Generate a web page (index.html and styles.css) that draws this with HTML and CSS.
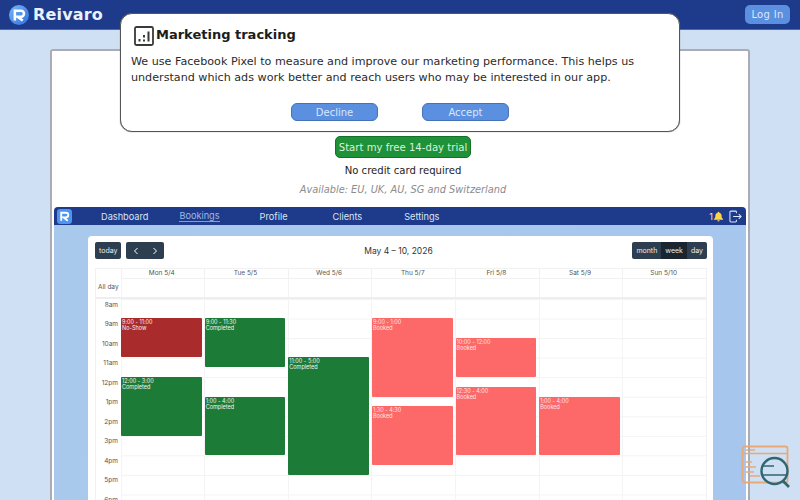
FILE: index.html
```html
<!DOCTYPE html>
<html lang="en">
<head>
    <meta charset="UTF-8">
    <meta name="viewport" content="width=device-width, initial-scale=1.0">
    <title>Reivaro</title>
    <link rel="stylesheet" href="styles.css">
</head>
<body>
    <header class="topbar">
        <div class="brand">
            <svg class="brand-logo" viewBox="0 0 24 24" width="20" height="20">
                <defs>
                    <linearGradient id="logo-bg" x1="0" y1="0" x2="1" y2="1">
                        <stop offset="0" stop-color="#7ab8f7"/>
                        <stop offset="1" stop-color="#2f6fe0"/>
                    </linearGradient>
                </defs>
                <circle cx="12" cy="12" r="12" fill="url(#logo-bg)"/>
                <path d="M7 18.500V7h7.500a3.500 3.500 0 0 1 0 7H10l6.500 4.500" fill="none" stroke="#fff" stroke-width="3"/>
            </svg>
            <span class="brand-name">Reivaro</span>
        </div>
        <button class="login-btn">Log In</button>
    </header>

    <main class="page-card">
        <div class="hero">
            <button class="trial-btn">Start my free 14-day trial</button>
            <p class="no-card">No credit card required</p>
            <p class="available">Available: EU, UK, AU, SG and Switzerland</p>
        </div>

        <div class="app-shot">
            <nav class="app-nav">
                <svg class="app-logo" viewBox="0 0 16 16" width="15" height="15">
                    <rect width="16" height="16" rx="3.500" fill="#4f94ee"/>
                    <path d="M4.500 12.500V4h5a2.400 2.400 0 0 1 0 5H7l4.500 3.500" fill="none" stroke="#fff" stroke-width="2"/>
                </svg>
                <a class="app-link link-dashboard">Dashboard</a>
                <a class="app-link link-bookings">Bookings</a>
                <a class="app-link link-profile">Profile</a>
                <a class="app-link link-clients">Clients</a>
                <a class="app-link link-settings">Settings</a>
                <div class="app-nav-right">
                    <span class="notif-count">1</span>
                    <svg viewBox="0 0 12 12" width="11" height="11">
                        <path d="M6 .8a1 1 0 0 1 1 1c1.700.5 2.400 1.800 2.400 3.400 0 1.900.6 2.700 1.600 3.600v.7H1v-.7c1-.9 1.600-1.700 1.600-3.600C2.600 3.600 3.300 2.300 5 1.800a1 1 0 0 1 1-1zM4.700 10.200h2.600a1.300 1.300 0 0 1-2.600 0z" fill="#fcd34d"/>
                    </svg>
                    <svg class="logout-icon" viewBox="0 0 14 14" width="13" height="13" fill="none" stroke="#dbeafe" stroke-width="1.100">
                        <path d="M8 3.500V2.200a1 1 0 0 0-1-1H2a1 1 0 0 0-1 1v9.600a1 1 0 0 0 1 1h5a1 1 0 0 0 1-1v-1.300"/>
                        <path d="M4.500 7h8.500M10.500 4.500 13 7l-2.500 2.500"/>
                    </svg>
                </div>
            </nav>

            <section class="app-body">
                <div class="calendar">
                    <div class="cal-toolbar">
                        <div class="cal-left">
                            <button class="cal-btn">today</button>
                            <div class="cal-group">
                                <button class="cal-btn cal-arrow">
                                    <svg viewBox="0 0 8 8" width="8" height="8" fill="none" stroke="#fff" stroke-width="1"><path d="M5.500 1 2.500 4l3 3"/></svg>
                                </button>
                                <button class="cal-btn cal-arrow">
                                    <svg viewBox="0 0 8 8" width="8" height="8" fill="none" stroke="#fff" stroke-width="1"><path d="M2.500 1l3 3-3 3"/></svg>
                                </button>
                            </div>
                        </div>
                        <h3 class="cal-title">May 4 – 10, 2026</h3>
                        <div class="cal-group">
                            <button class="cal-btn">month</button>
                            <button class="cal-btn active">week</button>
                            <button class="cal-btn">day</button>
                        </div>
                    </div>

                    <div class="cal-grid">
                        <div class="head-row">
                            <div class="axis"></div>
                            <div class="head-cell">Mon 5/4</div>
                            <div class="head-cell">Tue 5/5</div>
                            <div class="head-cell">Wed 5/6</div>
                            <div class="head-cell">Thu 5/7</div>
                            <div class="head-cell">Fri 5/8</div>
                            <div class="head-cell">Sat 5/9</div>
                            <div class="head-cell">Sun 5/10</div>
                        </div>
                        <div class="allday-row">
                            <div class="axis allday-label">All day</div>
                            <div class="allday-cell"></div>
                            <div class="allday-cell"></div>
                            <div class="allday-cell"></div>
                            <div class="allday-cell"></div>
                            <div class="allday-cell"></div>
                            <div class="allday-cell"></div>
                            <div class="allday-cell"></div>
                        </div>
                        <div class="time-grid">
                            <div class="hours">
                                <div class="hour"><span>8am</span></div>
                                <div class="hour"><span>9am</span></div>
                                <div class="hour"><span>10am</span></div>
                                <div class="hour"><span>11am</span></div>
                                <div class="hour"><span>12pm</span></div>
                                <div class="hour"><span>1pm</span></div>
                                <div class="hour"><span>2pm</span></div>
                                <div class="hour"><span>3pm</span></div>
                                <div class="hour"><span>4pm</span></div>
                                <div class="hour"><span>5pm</span></div>
                                <div class="hour"><span>6pm</span></div>
                            </div>
                            <div class="days">
                                <div class="day">
                                    <div class="event no-show" style="top:19.5px;height:39px"><b>9:00 - 11:00</b>No-Show</div>
                                    <div class="event completed" style="top:78.5px;height:58.5px"><b>12:00 - 3:00</b>Completed</div>
                                </div>
                                <div class="day">
                                    <div class="event completed" style="top:19.5px;height:48.5px"><b>9:00 - 11:30</b>Completed</div>
                                    <div class="event completed" style="top:98px;height:58.5px"><b>1:00 - 4:00</b>Completed</div>
                                </div>
                                <div class="day">
                                    <div class="event completed" style="top:58.5px;height:117.5px"><b>11:00 - 5:00</b>Completed</div>
                                </div>
                                <div class="day">
                                    <div class="event booked" style="top:19.5px;height:78.5px"><b>9:00 - 1:00</b>Booked</div>
                                    <div class="event booked" style="top:107.5px;height:58.5px"><b>1:30 - 4:30</b>Booked</div>
                                </div>
                                <div class="day">
                                    <div class="event booked" style="top:39px;height:39px"><b>10:00 - 12:00</b>Booked</div>
                                    <div class="event booked" style="top:88.5px;height:68px"><b>12:30 - 4:00</b>Booked</div>
                                </div>
                                <div class="day">
                                    <div class="event booked" style="top:98px;height:58.5px"><b>1:00 - 4:00</b>Booked</div>
                                </div>
                                <div class="day"></div>
                            </div>
                        </div>
                    </div>
                </div>
            </section>
        </div>
    </main>

    <div class="consent">
        <h2 class="consent-title">
            <svg viewBox="0 0 20 20" width="20" height="20" fill="none" stroke="#3a3a3a" stroke-width="1.800">
                <rect x="1" y="1" width="18" height="18" rx="1.500"/>
                <path d="M5.500 15.500v-2.500M10 15.500v-2M10 11.500v-2.500M14.500 15.500v-10" stroke-width="2"/>
            </svg>
            <span class="consent-heading">Marketing tracking</span>
        </h2>
        <p class="consent-text">We use Facebook Pixel to measure and improve our marketing performance. This helps us understand which ads work better and reach users who may be interested in our app.</p>
        <div class="consent-actions">
            <button class="consent-btn">Decline</button>
            <button class="consent-btn">Accept</button>
        </div>
    </div>

    <svg class="watermark" viewBox="0 0 50 44" width="50" height="44" fill="none">
        <rect x="1.500" y="1.500" width="45" height="36" rx="2" stroke="#e8a977" stroke-width="1.800"/>
        <path d="M1.500 8.500h45M5 5h2M9 5h5M5 17h6M5 22h10M5 27h8M9 31h10" stroke="#e8a977" stroke-width="1.400"/>
        <circle cx="33.500" cy="26" r="13" fill="#cfe0f5" fill-opacity=".4" stroke="#2f6670" stroke-width="2.400"/>
        <path d="M21 30h25M22 21h11" stroke="#2f6670" stroke-width="1.600"/>
        <path d="M42 36l6 6" stroke="#2f6670" stroke-width="2.600"/>
    </svg>
</body>
</html>
```

FILE: styles.css
```css
html, body {
    height: 100%;
    overflow: hidden;
}
body {
    font-family: "DejaVu Sans", sans-serif;
    margin: 0;
    background-color: #cfe0f5;
    color: #222;
}
button {
    font-family: inherit;
    cursor: pointer;
}
p, h2, h3 {
    margin: 0;
}

.topbar {
    height: 30px;
    box-sizing: border-box;
    background-color: #1e3a8a;
    border-bottom: 1px solid #4169c4;
    display: flex;
    align-items: center;
    justify-content: space-between;
    padding: 0 10px 0 9px;
}
.brand {
    display: flex;
    align-items: center;
    gap: 4px;
}
.brand-name {
    color: #eaf1fb;
    font-size: 16px;
    font-weight: bold;
    letter-spacing: .17px;
}
.login-btn {
    width: 45px;
    height: 19px;
    padding: 0;
    font-size: 10px;
    color: #dbe7fa;
    background-color: #5b8fdf;
    border: 0;
    border-radius: 5px;
    letter-spacing: .3px;
}

.page-card {
    width: 696px;
    height: 460px;
    margin: 19px auto 0;
    padding-top: 85px;
    background-color: white;
    border: 2px solid #a9adb3;
    border-bottom: 0;
    border-radius: 3px 3px 0 0;
    display: flex;
    flex-direction: column;
    align-items: center;
}
.hero {
    display: flex;
    flex-direction: column;
    align-items: center;
    padding-left: 6px;
}
.trial-btn {
    width: 136px;
    height: 22px;
    padding: 0;
    font-size: 10.15px;
    white-space: nowrap;
    color: #d8f3dc;
    background-color: #1f9138;
    border: 1px solid #15702a;
    border-radius: 5px;
}
.no-card {
    margin-top: 6px;
    font-size: 10.1px;
    line-height: 13px;
    color: #222;
}
.available {
    margin-top: 6px;
    font-size: 9.8px;
    line-height: 13px;
    font-style: italic;
    color: #8c8c8c;
}

.app-shot {
    width: 692px;
    margin-top: 11px;
    flex: 1;
}
.app-nav {
    height: 18px;
    background-color: #1e3a8a;
    border-radius: 4px 4px 0 0;
    display: flex;
    align-items: center;
    padding-left: 3px;
    font-family: "Inter", sans-serif;
    font-size: 9.2px;
    color: #dbe5f5;
}
.app-link {
    flex: none;
}
.link-dashboard { margin-left: 29px; }
.link-bookings { margin-left: 31px; color: #9db8e6; border-bottom: 1px solid #7f9fd8; line-height: 10px; }
.link-profile { margin-left: 40px; }
.link-clients { margin-left: 45px; }
.link-settings { margin-left: 42px; }
.app-nav-right {
    margin-left: auto;
    padding-right: 4px;
    display: flex;
    align-items: center;
}
.logout-icon {
    margin-left: 5px;
}
.notif-count {
    font-size: 9px;
    color: #f3e6b8;
}

.app-body {
    height: 300px;
    background: linear-gradient(100deg, #a9c9ec, #a6c6ee);
    padding: 11px 33px 0 34px;
}
.calendar {
    height: 100%;
    background-color: white;
    border-radius: 4px 4px 0 0;
    padding: 6px 6px 0 7px;
    font-family: "Inter", sans-serif;
}
.cal-toolbar {
    display: flex;
    align-items: center;
    justify-content: space-between;
    height: 17px;
    margin-bottom: 9px;
}
.cal-left {
    display: flex;
    gap: 5px;
}
.cal-group {
    display: flex;
}
.cal-btn {
    height: 17px;
    padding: 0 4px;
    font-family: "Inter", sans-serif;
    font-size: 7px;
    color: #e8edf2;
    background-color: #2c3e50;
    border: 0;
    border-radius: 2px;
}
.cal-group .cal-btn {
    border-radius: 0;
}
.cal-group .cal-btn:first-child {
    border-radius: 2px 0 0 2px;
}
.cal-group .cal-btn:last-child {
    border-radius: 0 2px 2px 0;
}
.cal-btn.active {
    background-color: #1a252f;
}
.cal-arrow {
    width: 19px;
    padding: 0;
    display: flex;
    align-items: center;
    justify-content: center;
}
.cal-title {
    font-size: 8.5px;
    font-weight: 400;
    color: #333;
}

.cal-grid {
    border: 1px solid #f1f1f1;
    border-bottom: 0;
    font-size: 6.5px;
    color: #555;
}
.head-row,
.allday-row {
    display: grid;
    grid-template-columns: 24.5px repeat(7, 1fr);
}
.head-cell {
    height: 9px;
    line-height: 9px;
    text-align: center;
    padding-right: 2px;
    border-left: 1px solid #f1f1f1;
    border-bottom: 1px solid #f1f1f1;
}
.allday-row {
    height: 19.5px;
    box-sizing: border-box;
    border-bottom: 2px solid #eee;
}
.allday-cell {
    border-left: 1px solid #f4f4f4;
}
.allday-label {
    line-height: 17px;
    text-align: center;
}
.time-grid {
    display: grid;
    grid-template-columns: 24.5px 1fr;
}
.hour {
    height: 19.55px;
    line-height: 19.55px;
    text-align: right;
    padding-right: 2.5px;
    box-sizing: border-box;
}
.hour span {
    position: relative;
    top: -3px;
}
.days {
    display: grid;
    grid-template-columns: repeat(7, 1fr);
    background-image: linear-gradient(#f3f3f3 1px, transparent 1px);
    background-size: 100% 19.55px;
}
.day {
    position: relative;
    border-left: 1px solid #f4f4f4;
}
.event {
    position: absolute;
    left: -0.5px;
    right: 2.5px;
    box-sizing: border-box;
    padding: 1px;
    font-size: 5.5px;
    line-height: 6px;
    border-radius: 1px;
    color: #f4f4f4;
}
.event b {
    display: block;
    font-weight: 400;
}
.event.completed { background-color: #1b7b37; }
.event.no-show { background-color: #aa2b2b; }
.event.booked { background-color: #fd6868; color: #ffe3e3; }

.consent {
    position: absolute;
    left: 120px;
    top: 13px;
    width: 560px;
    height: 119px;
    box-sizing: border-box;
    background-color: white;
    border: 1px solid #555;
    border-radius: 12px;
    box-shadow: 0 0 1px #555;
    padding: 12px 10px 0;
}
.consent-title {
    display: flex;
    align-items: center;
    gap: 2px;
    padding-left: 3px;
    font-size: 13px;
    line-height: 20px;
    color: #1c1c1c;
}
.consent-heading {
    position: relative;
    top: -1.5px;
}
.consent-text {
    margin-top: 8px;
    font-size: 11.15px;
    line-height: 15.5px;
    color: #2b2b2b;
}
.consent-actions {
    margin-top: 18px;
    display: flex;
    justify-content: center;
    gap: 44px;
}
.consent-btn {
    width: 87px;
    height: 18px;
    padding: 0;
    font-size: 10px;
    color: #dbe7fa;
    background-color: #5b8fdf;
    border: 1px solid #4472b8;
    border-radius: 6px;
}

.watermark {
    position: absolute;
    left: 741px;
    top: 445px;
}
```
